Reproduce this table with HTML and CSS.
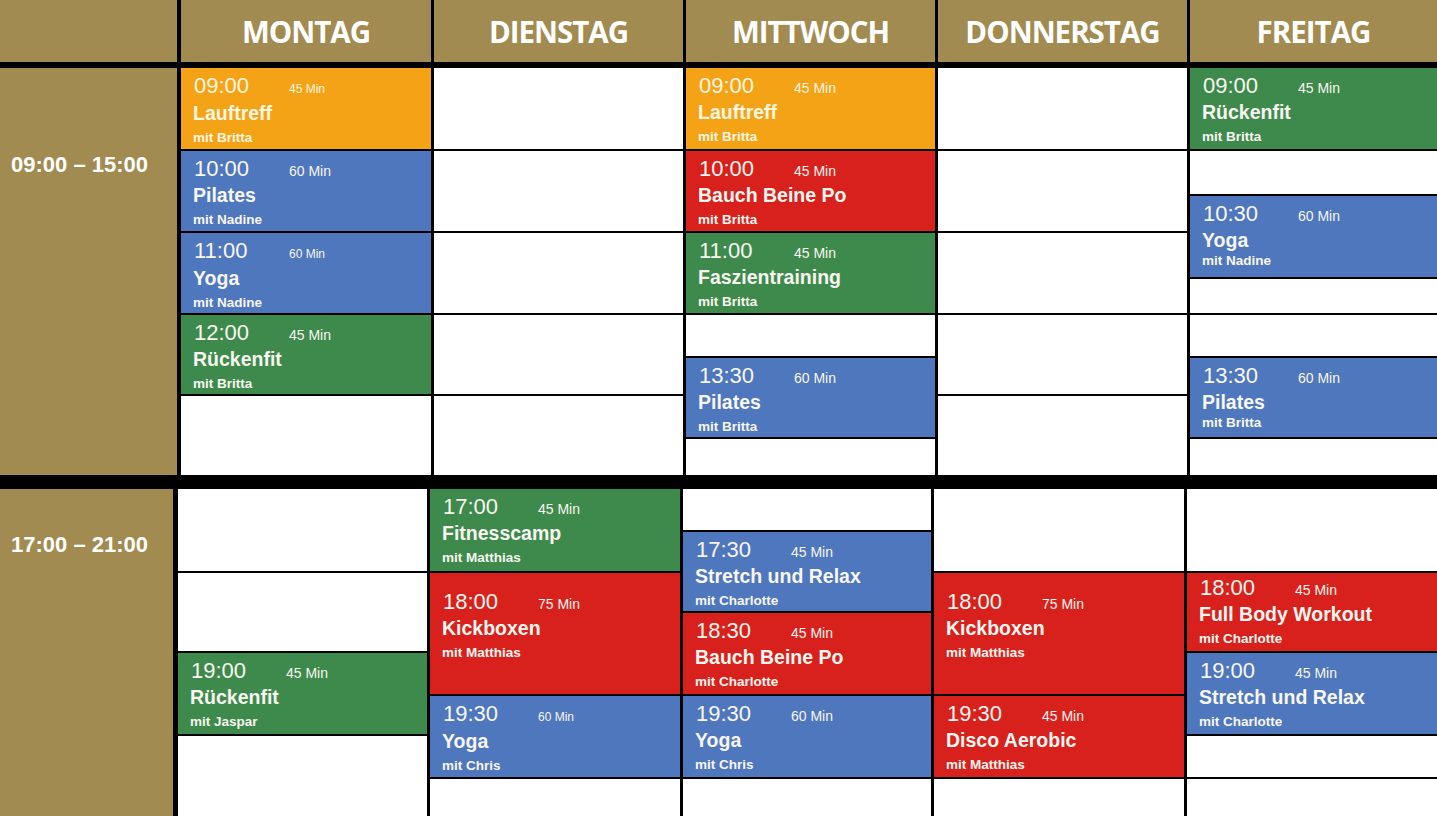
FILE: index.html
```html
<!DOCTYPE html>
<html lang="de">
<head>
<meta charset="utf-8">
<title>Kursplan</title>
<link rel="stylesheet" href="styles.css">
</head>
<body>
<div class="timetable">
  <div class="head">
    <div class="corner"></div>
    <div class="day-name">MONTAG</div>
    <div class="day-name">DIENSTAG</div>
    <div class="day-name">MITTWOCH</div>
    <div class="day-name">DONNERSTAG</div>
    <div class="day-name">FREITAG</div>
  </div>

  <div class="section upper">
    <div class="period">09:00 – 15:00</div>

    <div class="col">
      <div class="cell orange h2"><div class="top"><span class="time">09:00</span><span class="dur sm">45 Min</span></div><div class="name">Lauftreff</div><div class="coach">mit Britta</div></div>
      <div class="cell blue h2"><div class="top"><span class="time">10:00</span><span class="dur">60 Min</span></div><div class="name">Pilates</div><div class="coach">mit Nadine</div></div>
      <div class="cell blue h2"><div class="top"><span class="time">11:00</span><span class="dur sm">60 Min</span></div><div class="name">Yoga</div><div class="coach">mit Nadine</div></div>
      <div class="cell green h2"><div class="top"><span class="time">12:00</span><span class="dur">45 Min</span></div><div class="name">Rückenfit</div><div class="coach">mit Britta</div></div>
      <div class="cell empty h2"></div>
    </div>

    <div class="col">
      <div class="cell empty h2"></div>
      <div class="cell empty h2"></div>
      <div class="cell empty h2"></div>
      <div class="cell empty h2"></div>
      <div class="cell empty h2"></div>
    </div>

    <div class="col">
      <div class="cell orange h2"><div class="top"><span class="time">09:00</span><span class="dur">45 Min</span></div><div class="name">Lauftreff</div><div class="coach">mit Britta</div></div>
      <div class="cell red h2"><div class="top"><span class="time">10:00</span><span class="dur">45 Min</span></div><div class="name">Bauch Beine Po</div><div class="coach">mit Britta</div></div>
      <div class="cell green h2"><div class="top"><span class="time">11:00</span><span class="dur">45 Min</span></div><div class="name">Faszientraining</div><div class="coach">mit Britta</div></div>
      <div class="cell empty h1"></div>
      <div class="cell blue h2"><div class="top"><span class="time">13:30</span><span class="dur">60 Min</span></div><div class="name">Pilates</div><div class="coach">mit Britta</div></div>
      <div class="cell empty h1"></div>
    </div>

    <div class="col">
      <div class="cell empty h2"></div>
      <div class="cell empty h2"></div>
      <div class="cell empty h2"></div>
      <div class="cell empty h2"></div>
      <div class="cell empty h2"></div>
    </div>

    <div class="col">
      <div class="cell green h2"><div class="top"><span class="time">09:00</span><span class="dur">45 Min</span></div><div class="name">Rückenfit</div><div class="coach">mit Britta</div></div>
      <div class="cell empty h1"></div>
      <div class="cell blue h2"><div class="top"><span class="time">10:30</span><span class="dur">60 Min</span></div><div class="name">Yoga</div><div class="coach tight">mit Nadine</div></div>
      <div class="cell empty h1"></div>
      <div class="cell empty h1"></div>
      <div class="cell blue h2"><div class="top"><span class="time">13:30</span><span class="dur">60 Min</span></div><div class="name">Pilates</div><div class="coach tight">mit Britta</div></div>
      <div class="cell empty h1"></div>
    </div>
  </div>

  <div class="section lower">
    <div class="period">17:00 – 21:00</div>

    <div class="col">
      <div class="cell empty h2"></div>
      <div class="cell empty h2"></div>
      <div class="cell green h2"><div class="top"><span class="time">19:00</span><span class="dur">45 Min</span></div><div class="name">Rückenfit</div><div class="coach">mit Jaspar</div></div>
      <div class="cell empty h2"></div>
    </div>

    <div class="col">
      <div class="cell green h2"><div class="top"><span class="time">17:00</span><span class="dur">45 Min</span></div><div class="name">Fitnesscamp</div><div class="coach">mit Matthias</div></div>
      <div class="cell red h3"><div class="top"><span class="time">18:00</span><span class="dur">75 Min</span></div><div class="name">Kickboxen</div><div class="coach">mit Matthias</div></div>
      <div class="cell blue h2"><div class="top"><span class="time">19:30</span><span class="dur sm">60 Min</span></div><div class="name">Yoga</div><div class="coach">mit Chris</div></div>
      <div class="cell empty h1"></div>
    </div>

    <div class="col">
      <div class="cell empty h1"></div>
      <div class="cell blue h2"><div class="top"><span class="time">17:30</span><span class="dur">45 Min</span></div><div class="name">Stretch und Relax</div><div class="coach">mit Charlotte</div></div>
      <div class="cell red h2"><div class="top"><span class="time">18:30</span><span class="dur">45 Min</span></div><div class="name">Bauch Beine Po</div><div class="coach">mit Charlotte</div></div>
      <div class="cell blue h2"><div class="top"><span class="time">19:30</span><span class="dur">60 Min</span></div><div class="name">Yoga</div><div class="coach">mit Chris</div></div>
      <div class="cell empty h1"></div>
    </div>

    <div class="col">
      <div class="cell empty h2"></div>
      <div class="cell red h3"><div class="top"><span class="time">18:00</span><span class="dur">75 Min</span></div><div class="name">Kickboxen</div><div class="coach">mit Matthias</div></div>
      <div class="cell red h2"><div class="top"><span class="time">19:30</span><span class="dur">45 Min</span></div><div class="name">Disco Aerobic</div><div class="coach">mit Matthias</div></div>
      <div class="cell empty h1"></div>
    </div>

    <div class="col">
      <div class="cell empty h2"></div>
      <div class="cell red h2 raised"><div class="top"><span class="time">18:00</span><span class="dur">45 Min</span></div><div class="name">Full Body Workout</div><div class="coach">mit Charlotte</div></div>
      <div class="cell blue h2"><div class="top"><span class="time">19:00</span><span class="dur">45 Min</span></div><div class="name">Stretch und Relax</div><div class="coach">mit Charlotte</div></div>
      <div class="cell empty h1"></div>
      <div class="cell empty h1"></div>
    </div>
  </div>
</div>
</body>
</html>
```

FILE: styles.css
```css
html, body {
  margin: 0;
  padding: 0;
  background: #000;
}

body {
  font-family: "Liberation Sans", Arial, sans-serif;
  overflow: hidden;
}

.timetable {
  width: 1437px;
  height: 816px;
  overflow: hidden;
  background: #000;
}

/* header row */
.head {
  display: grid;
  grid-template-columns: 178px 250px 249px 249px 249px 1fr;
  column-gap: 3px;
  height: 62px;
  margin-bottom: 6px;
}

.head .corner {
  background: #a18b51;
  margin-right: 1px;
}

.day-name {
  background: #a18b51;
  color: #fff;
  font-family: "Open Sans", "Lato", sans-serif;
  font-weight: 700;
  font-stretch: 90%;
  font-size: 29.5px;
  letter-spacing: -1px;
  display: flex;
  align-items: center;
  justify-content: center;
  padding-top: 1px;
  box-sizing: border-box;
}

/* sections */
.section {
  display: grid;
  column-gap: 3px;
}

.upper {
  grid-template-columns: 178px 250px 249px 249px 249px 1fr;
  height: 407px;
  margin-bottom: 14px;
}

.upper .period {
  margin-right: 1px;
  padding-top: 84px;
}

.lower {
  grid-template-columns: 175px 249px 250px 248px 250px 1fr;
  height: 327px;
}

.lower .period {
  margin-right: 2px;
  padding-top: 43px;
}

.period {
  background: #a18b51;
  color: #fff;
  font-weight: 700;
  font-size: 22px;
  line-height: 25px;
  padding-left: 11px;
  white-space: nowrap;
}

/* every day column shares the slot template of its section */
.col {
  display: grid;
  row-gap: 2px;
}

.upper .col {
  grid-template-rows: 39.5fr 39.5fr 43fr 34.5fr 44fr 34fr 41fr 36.5fr 40.5fr 36.5fr;
}

.lower .col {
  grid-template-rows: 40.5fr 39fr 38fr 38fr 41fr 38.5fr 40.5fr 37.5fr;
}

.h1 { grid-row: span 1; }
.h2 { grid-row: span 2; }
.h3 { grid-row: span 3; }

/* cells */
.cell {
  color: #f8f6f0;
  padding: 5px 0 0 13px;
  box-sizing: border-box;
  overflow: hidden;
  white-space: nowrap;
}

.cell.h3 {
  padding-top: 16px;
}

.cell.raised {
  padding-top: 2px;
}

.empty  { background: #fff; }
.orange { background: #f5a316; color: #fff6e0; }
.blue   { background: #4f77be; }
.red    { background: #d8211c; }
.green  { background: #3e8a4d; }

.top {
  display: flex;
  align-items: baseline;
  line-height: 25px;
}

.time {
  font-size: 22px;
  width: 95px;
  flex: none;
}

.dur {
  font-size: 14px;
}

.dur.sm {
  font-size: 12px;
}

.name {
  font-weight: 700;
  font-size: 19.5px;
  line-height: 22px;
  margin-left: -1px;
}

.coach {
  font-weight: 700;
  font-size: 13.5px;
  line-height: 17px;
  margin-top: 5px;
  margin-left: -1px;
}

.coach.tight {
  margin-top: 1px;
}
```
